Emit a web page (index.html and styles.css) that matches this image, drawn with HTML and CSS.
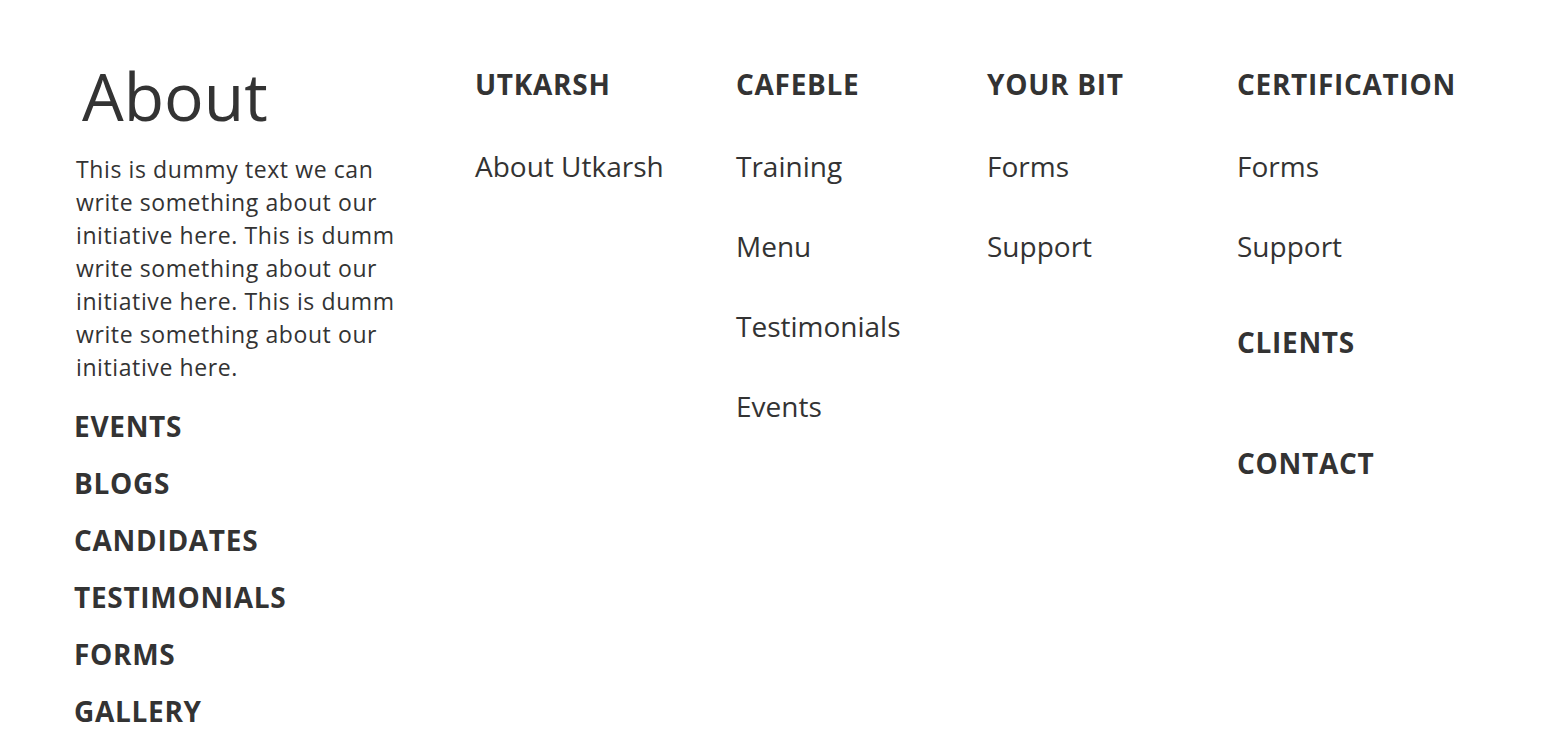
FILE: index.html
```html
<!DOCTYPE html>
<html lang="en">
<head>
<meta charset="utf-8">
<title>Footer</title>
<link rel="stylesheet" href="styles.css">
</head>
<body>
<footer class="footer">
  <div class="col col-about">
    <h1 class="about-title">About</h1>
    <p class="about-text">This is dummy text we can<br>write something about our<br>initiative here. This is dumm<br>write something about our<br>initiative here. This is dumm<br>write something about our<br>initiative here.</p>
    <ul class="main-links">
      <li><a href="#">EVENTS</a></li>
      <li><a href="#">BLOGS</a></li>
      <li><a href="#">CANDIDATES</a></li>
      <li><a href="#">TESTIMONIALS</a></li>
      <li><a href="#">FORMS</a></li>
      <li><a href="#">GALLERY</a></li>
    </ul>
  </div>
  <div class="col">
    <h2 class="col-title">UTKARSH</h2>
    <ul class="sub-links">
      <li><a href="#">About Utkarsh</a></li>
    </ul>
  </div>
  <div class="col">
    <h2 class="col-title">CAFEBLE</h2>
    <ul class="sub-links">
      <li><a href="#">Training</a></li>
      <li><a href="#">Menu</a></li>
      <li><a href="#">Testimonials</a></li>
      <li><a href="#">Events</a></li>
    </ul>
  </div>
  <div class="col">
    <h2 class="col-title">YOUR BIT</h2>
    <ul class="sub-links">
      <li><a href="#">Forms</a></li>
      <li><a href="#">Support</a></li>
    </ul>
  </div>
  <div class="col">
    <h2 class="col-title">CERTIFICATION</h2>
    <ul class="sub-links">
      <li><a href="#">Forms</a></li>
      <li><a href="#">Support</a></li>
    </ul>
    <h2 class="col-title col-title-clients">CLIENTS</h2>
    <h2 class="col-title col-title-contact">CONTACT</h2>
  </div>
</footer>
</body>
</html>
```
FILE: styles.css
```css
* { box-sizing: border-box; }
html, body { margin: 0; padding: 0; background: #fff; }
body {
  font-family: "Open Sans", "Noto Sans", "Liberation Sans", sans-serif;
  color: #333;
}
a { color: inherit; text-decoration: none; }
ul { list-style: none; margin: 0; padding: 0; }

.footer {
  display: grid;
  grid-template-columns: 399px 261px 251px 250px 1fr;
  padding: 56px 0 0 76px;
}

.about-title {
  margin: 0 0 18px 0;
  padding-left: 6px;
  font-size: 66px;
  line-height: 79px;
  font-weight: 400;
}
.about-text {
  margin: 0 0 14px 0;
  font-size: 23px;
  line-height: 33px;
  letter-spacing: 0.6px;
}
.main-links li {
  font-size: 28px;
  line-height: 57px;
  font-weight: 700;
  letter-spacing: 0.7px;
  margin-left: -2px;
}

.col-title {
  margin: 8px 0 22px 0;
  font-size: 28px;
  line-height: 40px;
  font-weight: 700;
  letter-spacing: 0.7px;
}
.sub-links li {
  font-size: 28px;
  line-height: 80px;
}
.col-title-clients { margin: 36px 0 0 0; }
.col-title-contact { margin: 81px 0 0 0; }
```
